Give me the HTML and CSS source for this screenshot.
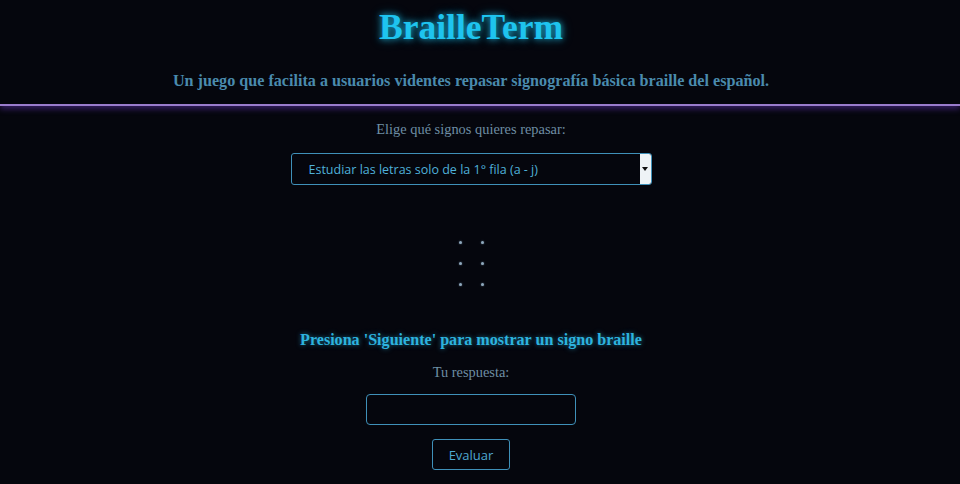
FILE: index.html
```html
<!DOCTYPE html>
<html lang="es">
<head>
<meta charset="utf-8">
<title>BrailleTerm</title>
<link rel="stylesheet" href="styles.css">
</head>
<body>
<header class="header">
  <h1 class="title">BrailleTerm</h1>
  <p class="subtitle">Un juego que facilita a usuarios videntes repasar signografía básica braille del español.</p>
</header>
<main class="main">
  <label class="label" for="modo">Elige qué signos quieres repasar:</label>
  <div class="select-box">
    <span class="select-text" id="modo">Estudiar las letras solo de la 1° fila (a - j)</span>
    <span class="select-arrow"><svg width="6" height="4" viewBox="0 0 6 4"><path d="M0 0H6L3 4Z" fill="#111"/></svg></span>
  </div>
  <div class="cell">
    <span class="dot"></span><span class="dot"></span>
    <span class="dot"></span><span class="dot"></span>
    <span class="dot"></span><span class="dot"></span>
  </div>
  <p class="prompt">Presiona 'Siguiente' para mostrar un signo braille</p>
  <label class="label label-answer" for="resp">Tu respuesta:</label>
  <input class="answer" id="resp" type="text">
  <button class="btn">Evaluar</button>
</main>
</body>
</html>
```
FILE: styles.css
```css
html, body {
  margin: 0;
  padding: 0;
  background: #05060d;
  height: 100%;
  overflow: hidden;
}
body {
  font-family: "Liberation Serif", serif;
}
.header {
  display: flex;
  flex-direction: column;
  align-items: center;
  border-bottom: 2px solid #9a7ccc;
  box-shadow: 0 3px 6px rgba(110, 60, 200, 0.45);
  padding-top: 7px;
  padding-right: 18px;
  height: 106px;
  box-sizing: border-box;
}
.title {
  margin: 0;
  font-size: 35.5px;
  font-weight: bold;
  line-height: 40px;
  color: #1ec4ef;
  text-shadow: 0 0 6px rgba(30, 196, 239, 0.8), 0 0 12px rgba(30, 196, 239, 0.4);
}
.subtitle {
  margin: 24px 0 0;
  font-size: 16.15px;
  font-weight: bold;
  line-height: 20px;
  color: #4a8bad;
}
.main {
  display: flex;
  flex-direction: column;
  align-items: center;
  padding-top: 14px;
  padding-right: 18px;
}
.label {
  font-size: 14.4px;
  line-height: 18px;
  color: #6e8ea4;
}
.select-box {
  margin-top: 15px;
  width: 361px;
  height: 32px;
  box-sizing: border-box;
  border: 1px solid #3f90b9;
  border-radius: 3px;
  display: flex;
  align-items: stretch;
}
.select-text {
  flex: 1;
  display: flex;
  align-items: center;
  padding-left: 17px;
  font-family: "Open Sans", sans-serif;
  font-size: 12.5px;
  color: #4fb1da;
}
.select-arrow {
  width: 11px;
  background: #eef3f6;
  border-radius: 0 2px 2px 0;
  display: flex;
  align-items: center;
  justify-content: center;
}
.cell {
  margin-top: 56px;
  display: grid;
  grid-template-columns: 3px 3px;
  grid-auto-rows: 3px;
  column-gap: 19px;
  row-gap: 18px;
}
.dot {
  width: 3px;
  height: 3px;
  border-radius: 50%;
  background: #8fa8bc;
  box-shadow: 0 0 2px rgba(140, 170, 200, 0.6);
}
.prompt {
  margin: 44px 0 0;
  font-size: 16.1px;
  font-weight: bold;
  line-height: 20px;
  color: #2db3df;
  text-shadow: 0 0 5px rgba(45, 179, 223, 0.6);
}
.label-answer {
  margin-top: 13px;
}
.answer {
  margin-top: 13px;
  width: 210px;
  height: 31px;
  box-sizing: border-box;
  background: transparent;
  border: 1px solid #3f90b9;
  border-radius: 4px;
  outline: none;
}
.btn {
  margin-top: 14px;
  width: 78px;
  height: 31px;
  box-sizing: border-box;
  background: transparent;
  border: 1px solid #3f90b9;
  border-radius: 3px;
  font-family: "Open Sans", sans-serif;
  font-size: 13px;
  color: #4fa8d1;
  padding: 0;
}
```
